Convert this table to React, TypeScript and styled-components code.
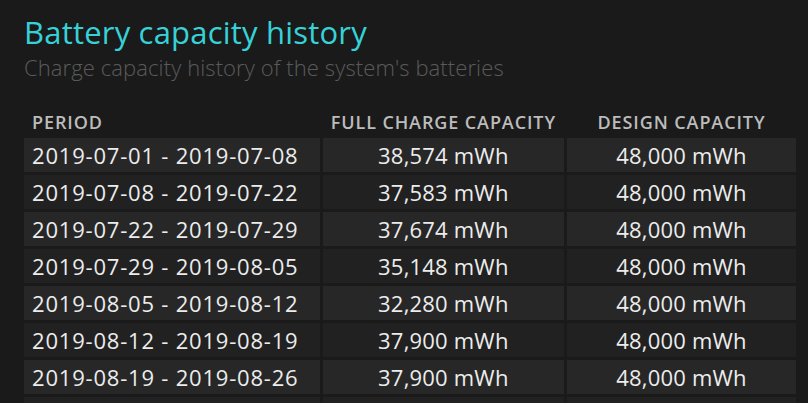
import React from 'react';
import styled, { createGlobalStyle } from 'styled-components';

const GlobalStyle = createGlobalStyle`
  html, body {
    margin: 0;
    padding: 0;
    background: #1a1a1a;
    overflow: hidden;
  }
`;

const Page = styled.div`
  width: 808px;
  height: 403px;
  padding: 12px 0 0 24px;
  box-sizing: border-box;
  background: #1a1a1a;
  overflow: hidden;
  font-family: 'Open Sans', 'Noto Sans', sans-serif;
`;

const Title = styled.h1`
  margin: 0;
  font-size: 31px;
  font-weight: 400;
  line-height: 40px;
  letter-spacing: 0.2px;
  color: #36d2d8;
`;

const Subtitle = styled.h2`
  margin: 2px 0 0;
  font-size: 22px;
  font-weight: 300;
  line-height: 26px;
  letter-spacing: 0.1px;
  color: #5a5a5a;
`;

const Table = styled.table`
  margin: 26px 0 0 -3px;
  border-collapse: separate;
  border-spacing: 3px;
  width: 778px;
`;

const HeadCell = styled.th<{ $align: 'left' | 'center' }>`
  height: 26px;
  padding: 0 8px;
  text-align: ${(p) => p.$align};
  font-size: 18px;
  font-weight: 600;
  color: #bcbcbc;
  letter-spacing: 0.9px;
  vertical-align: middle;
  white-space: nowrap;
`;

const Row = styled.tr<{ $odd: boolean }>`
  background: ${(p) => (p.$odd ? '#272727' : '#212121')};
`;

const Cell = styled.td<{ $align: 'left' | 'center'; $w: number; $spaced?: boolean }>`
  width: ${(p) => p.$w}px;
  height: 34px;
  padding: 0 8px;
  box-sizing: border-box;
  text-align: ${(p) => p.$align};
  font-size: 22px;
  letter-spacing: ${(p) => (p.$spaced ? '0.8px' : '0.2px')};
  color: #ececec;
  white-space: nowrap;
`;

const rows = [
  ['2019-07-01 - 2019-07-08', '38,574 mWh', '48,000 mWh'],
  ['2019-07-08 - 2019-07-22', '37,583 mWh', '48,000 mWh'],
  ['2019-07-22 - 2019-07-29', '37,674 mWh', '48,000 mWh'],
  ['2019-07-29 - 2019-08-05', '35,148 mWh', '48,000 mWh'],
  ['2019-08-05 - 2019-08-12', '32,280 mWh', '48,000 mWh'],
  ['2019-08-12 - 2019-08-19', '37,900 mWh', '48,000 mWh'],
  ['2019-08-19 - 2019-08-26', '37,900 mWh', '48,000 mWh'],
  ['2019-08-26 - 2019-09-02', '37,900 mWh', '48,000 mWh'],
];

export default function App() {
  return (
    <Page>
      <GlobalStyle />
      <Title>Battery capacity history</Title>
      <Subtitle>Charge capacity history of the system's batteries</Subtitle>
      <Table>
        <thead>
          <tr>
            <HeadCell $align="left">PERIOD</HeadCell>
            <HeadCell $align="center">FULL CHARGE CAPACITY</HeadCell>
            <HeadCell $align="center">DESIGN CAPACITY</HeadCell>
          </tr>
        </thead>
        <tbody>
          {rows.map((r, i) => (
            <Row key={r[0]} $odd={i % 2 === 0}>
              <Cell $align="left" $w={296} $spaced>{r[0]}</Cell>
              <Cell $align="center" $w={237}>{r[1]}</Cell>
              <Cell $align="center" $w={230}>{r[2]}</Cell>
            </Row>
          ))}
        </tbody>
      </Table>
    </Page>
  );
}
